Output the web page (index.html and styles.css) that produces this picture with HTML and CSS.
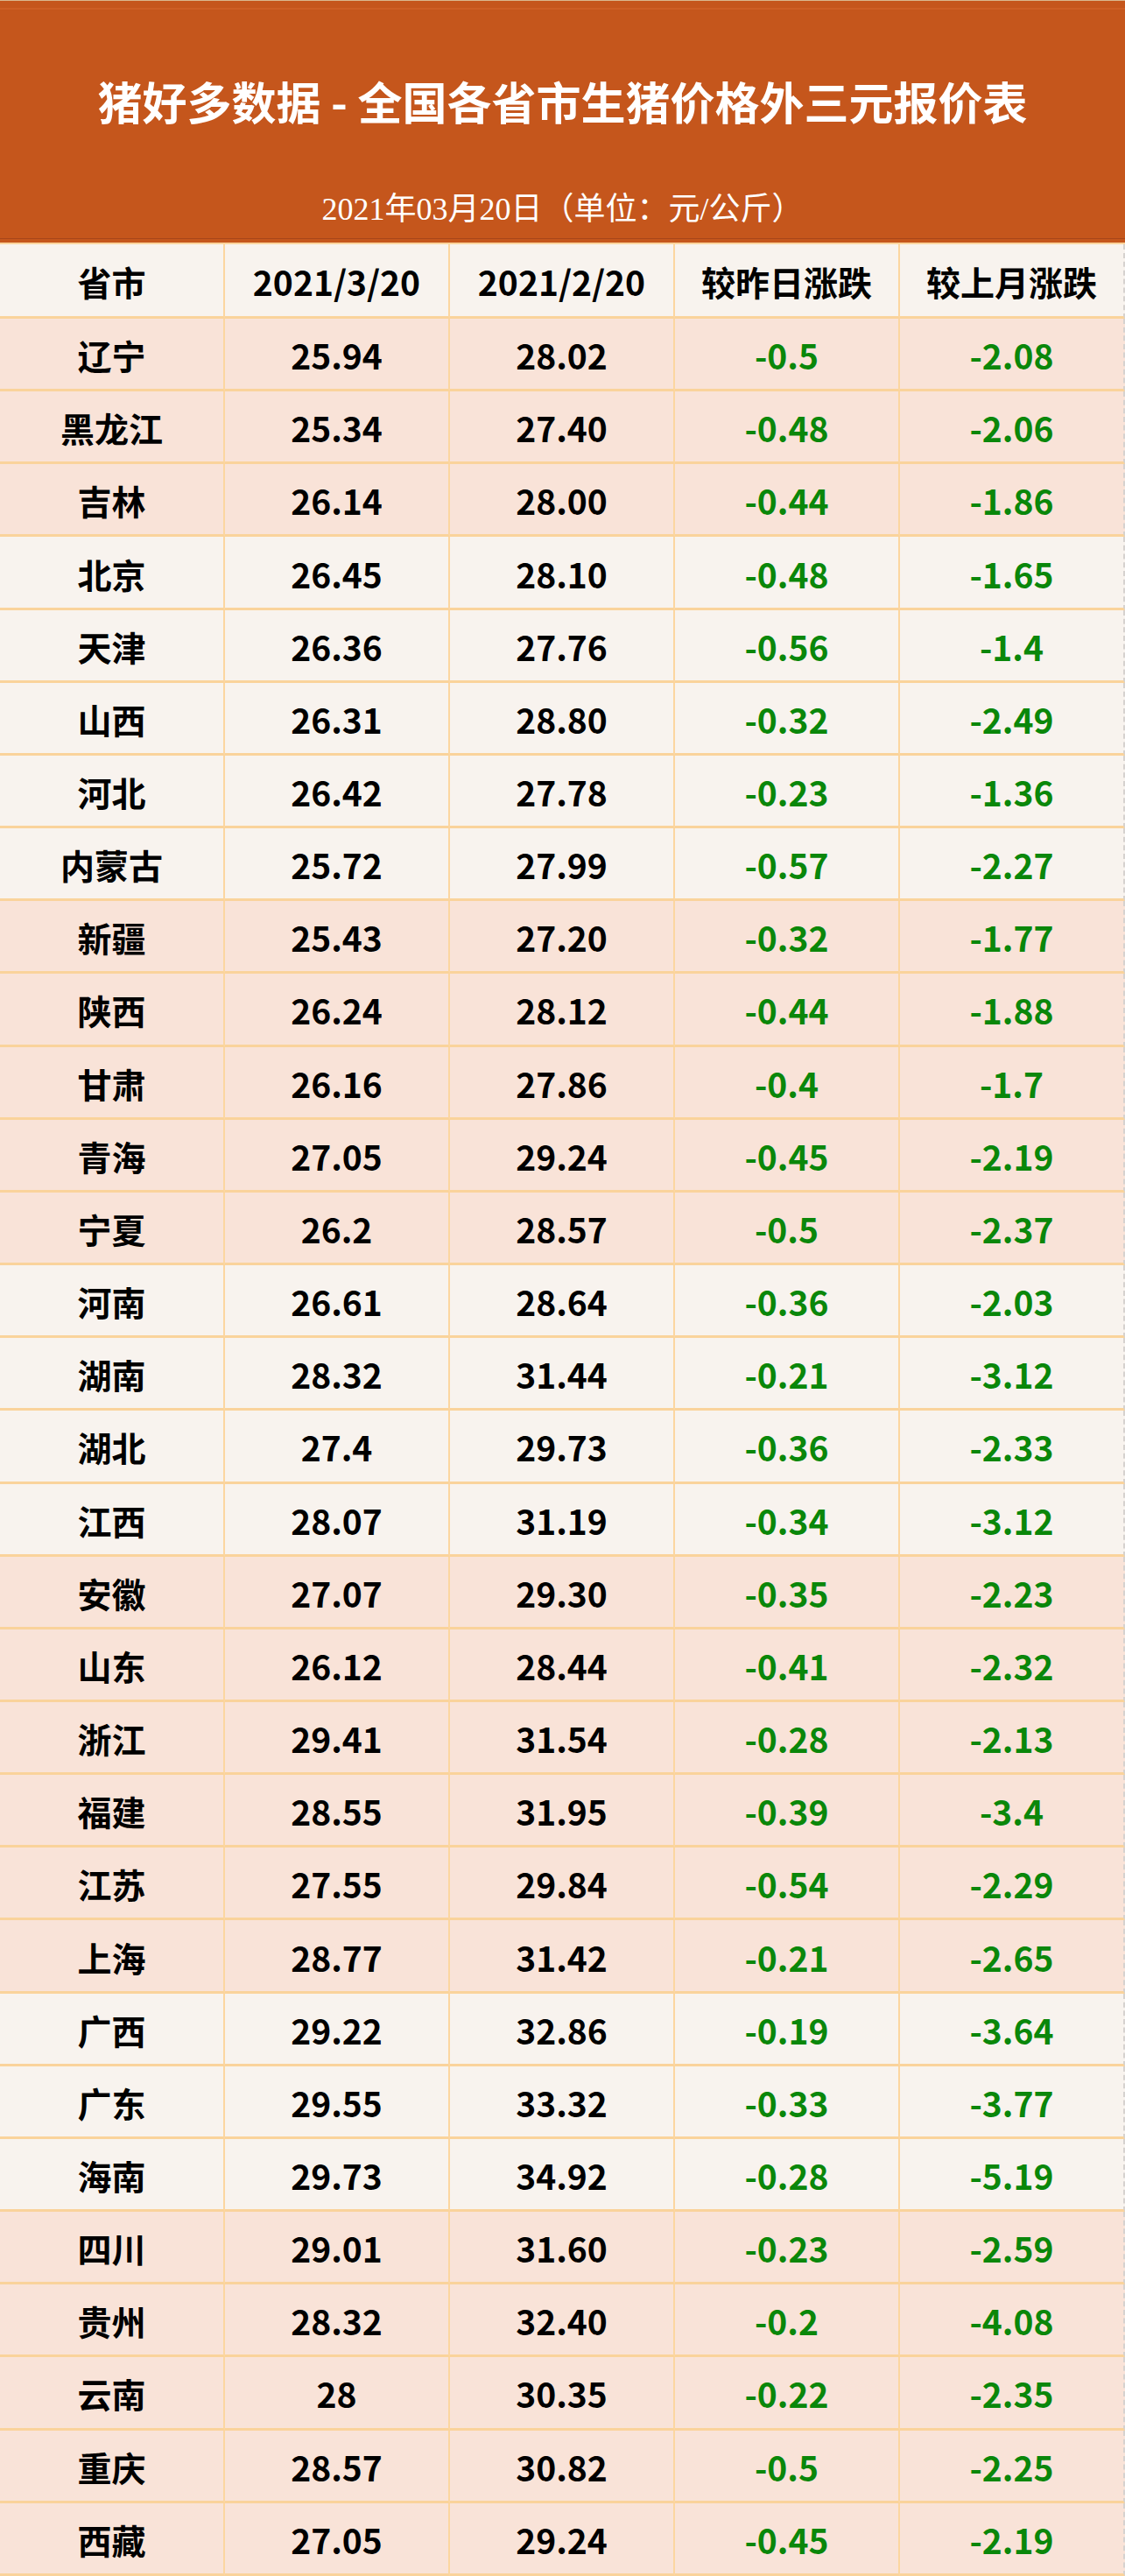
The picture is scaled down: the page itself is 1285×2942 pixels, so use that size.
FILE: index.html
```html
<!DOCTYPE html>
<html lang="zh-CN">
<head>
<meta charset="utf-8">
<title>猪好多数据 - 全国各省市生猪价格外三元报价表</title>
<link rel="stylesheet" href="styles.css">
</head>
<body>
<div class="sheet">
  <header class="banner">
    <h1 class="title">猪好多数据 - 全国各省市生猪价格外三元报价表</h1>
    <p class="subtitle">2021年03月20日（单位：元/公斤）</p>
  </header>
  <div class="grid">
    <div class="row head"><div class="cell">省市</div><div class="cell">2021/3/20</div><div class="cell">2021/2/20</div><div class="cell">较昨日涨跌</div><div class="cell">较上月涨跌</div></div>
    <div class="row pink"><div class="cell">辽宁</div><div class="cell">25.94</div><div class="cell">28.02</div><div class="cell neg">-0.5</div><div class="cell neg">-2.08</div></div>
    <div class="row pink"><div class="cell">黑龙江</div><div class="cell">25.34</div><div class="cell">27.40</div><div class="cell neg">-0.48</div><div class="cell neg">-2.06</div></div>
    <div class="row pink"><div class="cell">吉林</div><div class="cell">26.14</div><div class="cell">28.00</div><div class="cell neg">-0.44</div><div class="cell neg">-1.86</div></div>
    <div class="row light"><div class="cell">北京</div><div class="cell">26.45</div><div class="cell">28.10</div><div class="cell neg">-0.48</div><div class="cell neg">-1.65</div></div>
    <div class="row light"><div class="cell">天津</div><div class="cell">26.36</div><div class="cell">27.76</div><div class="cell neg">-0.56</div><div class="cell neg">-1.4</div></div>
    <div class="row light"><div class="cell">山西</div><div class="cell">26.31</div><div class="cell">28.80</div><div class="cell neg">-0.32</div><div class="cell neg">-2.49</div></div>
    <div class="row light"><div class="cell">河北</div><div class="cell">26.42</div><div class="cell">27.78</div><div class="cell neg">-0.23</div><div class="cell neg">-1.36</div></div>
    <div class="row light"><div class="cell">内蒙古</div><div class="cell">25.72</div><div class="cell">27.99</div><div class="cell neg">-0.57</div><div class="cell neg">-2.27</div></div>
    <div class="row pink"><div class="cell">新疆</div><div class="cell">25.43</div><div class="cell">27.20</div><div class="cell neg">-0.32</div><div class="cell neg">-1.77</div></div>
    <div class="row pink"><div class="cell">陕西</div><div class="cell">26.24</div><div class="cell">28.12</div><div class="cell neg">-0.44</div><div class="cell neg">-1.88</div></div>
    <div class="row pink"><div class="cell">甘肃</div><div class="cell">26.16</div><div class="cell">27.86</div><div class="cell neg">-0.4</div><div class="cell neg">-1.7</div></div>
    <div class="row pink"><div class="cell">青海</div><div class="cell">27.05</div><div class="cell">29.24</div><div class="cell neg">-0.45</div><div class="cell neg">-2.19</div></div>
    <div class="row pink"><div class="cell">宁夏</div><div class="cell">26.2</div><div class="cell">28.57</div><div class="cell neg">-0.5</div><div class="cell neg">-2.37</div></div>
    <div class="row light"><div class="cell">河南</div><div class="cell">26.61</div><div class="cell">28.64</div><div class="cell neg">-0.36</div><div class="cell neg">-2.03</div></div>
    <div class="row light"><div class="cell">湖南</div><div class="cell">28.32</div><div class="cell">31.44</div><div class="cell neg">-0.21</div><div class="cell neg">-3.12</div></div>
    <div class="row light"><div class="cell">湖北</div><div class="cell">27.4</div><div class="cell">29.73</div><div class="cell neg">-0.36</div><div class="cell neg">-2.33</div></div>
    <div class="row light"><div class="cell">江西</div><div class="cell">28.07</div><div class="cell">31.19</div><div class="cell neg">-0.34</div><div class="cell neg">-3.12</div></div>
    <div class="row pink"><div class="cell">安徽</div><div class="cell">27.07</div><div class="cell">29.30</div><div class="cell neg">-0.35</div><div class="cell neg">-2.23</div></div>
    <div class="row pink"><div class="cell">山东</div><div class="cell">26.12</div><div class="cell">28.44</div><div class="cell neg">-0.41</div><div class="cell neg">-2.32</div></div>
    <div class="row pink"><div class="cell">浙江</div><div class="cell">29.41</div><div class="cell">31.54</div><div class="cell neg">-0.28</div><div class="cell neg">-2.13</div></div>
    <div class="row pink"><div class="cell">福建</div><div class="cell">28.55</div><div class="cell">31.95</div><div class="cell neg">-0.39</div><div class="cell neg">-3.4</div></div>
    <div class="row pink"><div class="cell">江苏</div><div class="cell">27.55</div><div class="cell">29.84</div><div class="cell neg">-0.54</div><div class="cell neg">-2.29</div></div>
    <div class="row pink"><div class="cell">上海</div><div class="cell">28.77</div><div class="cell">31.42</div><div class="cell neg">-0.21</div><div class="cell neg">-2.65</div></div>
    <div class="row light"><div class="cell">广西</div><div class="cell">29.22</div><div class="cell">32.86</div><div class="cell neg">-0.19</div><div class="cell neg">-3.64</div></div>
    <div class="row light"><div class="cell">广东</div><div class="cell">29.55</div><div class="cell">33.32</div><div class="cell neg">-0.33</div><div class="cell neg">-3.77</div></div>
    <div class="row light"><div class="cell">海南</div><div class="cell">29.73</div><div class="cell">34.92</div><div class="cell neg">-0.28</div><div class="cell neg">-5.19</div></div>
    <div class="row pink"><div class="cell">四川</div><div class="cell">29.01</div><div class="cell">31.60</div><div class="cell neg">-0.23</div><div class="cell neg">-2.59</div></div>
    <div class="row pink"><div class="cell">贵州</div><div class="cell">28.32</div><div class="cell">32.40</div><div class="cell neg">-0.2</div><div class="cell neg">-4.08</div></div>
    <div class="row pink"><div class="cell">云南</div><div class="cell">28</div><div class="cell">30.35</div><div class="cell neg">-0.22</div><div class="cell neg">-2.35</div></div>
    <div class="row pink"><div class="cell">重庆</div><div class="cell">28.57</div><div class="cell">30.82</div><div class="cell neg">-0.5</div><div class="cell neg">-2.25</div></div>
    <div class="row pink"><div class="cell">西藏</div><div class="cell">27.05</div><div class="cell">29.24</div><div class="cell neg">-0.45</div><div class="cell neg">-2.19</div></div>
  </div>
</div>
</body>
</html>
```
FILE: styles.css
```css
html, body {
  margin: 0;
  padding: 0;
  background: #f8f3ee;
}

.sheet {
  width: 1285px;
  font-family: "Noto Sans CJK SC", "Noto Sans", sans-serif;
}

.banner {
  box-sizing: border-box;
  height: 279px;
  background: #c5561c;
  border-top: 1px solid #d9b88e;
  box-shadow: inset 0 8px 0 #c5561c, inset 0 10px 0 #cd5e24, inset 0 -6px 0 #c5561c, inset 0 -7px 0 #a8461a;
  display: flex;
  flex-direction: column;
  align-items: center;
  color: #ffffff;
}

.title {
  margin: 84px 0 0;
  font-size: 51px;
  line-height: 60px;
  font-weight: 700;
  letter-spacing: 0;
}

.subtitle {
  margin: 74px 0 0;
  font-family: "Liberation Serif", "Noto Sans CJK SC", serif;
  font-size: 36px;
  line-height: 40px;
  font-weight: 400;
}

.grid {
  display: grid;
  grid-template-columns: repeat(5, 1fr);
  grid-template-rows: 85px;
  grid-auto-rows: 83.16px;
  border-top: 2px solid #fbd49c;
  margin-top: -2px;
}

.row {
  display: contents;
}

.cell {
  box-sizing: border-box;
  display: flex;
  align-items: center;
  justify-content: center;
  border-right: 2px solid #fcd6a0;
  border-bottom: 3px solid #fad39b;
  font-size: 39px;
  font-weight: 700;
  color: #000000;
  padding-top: 2px;
}

.cell:last-child {
  border-right: 2px dashed #d6d2cf;
}

.head .cell {
  background: #f8f3ee;
}

.pink .cell {
  background: #f9e3d8;
}

.light .cell {
  background: #f8f3ee;
}

.cell.neg {
  color: #0a870a;
}
```
